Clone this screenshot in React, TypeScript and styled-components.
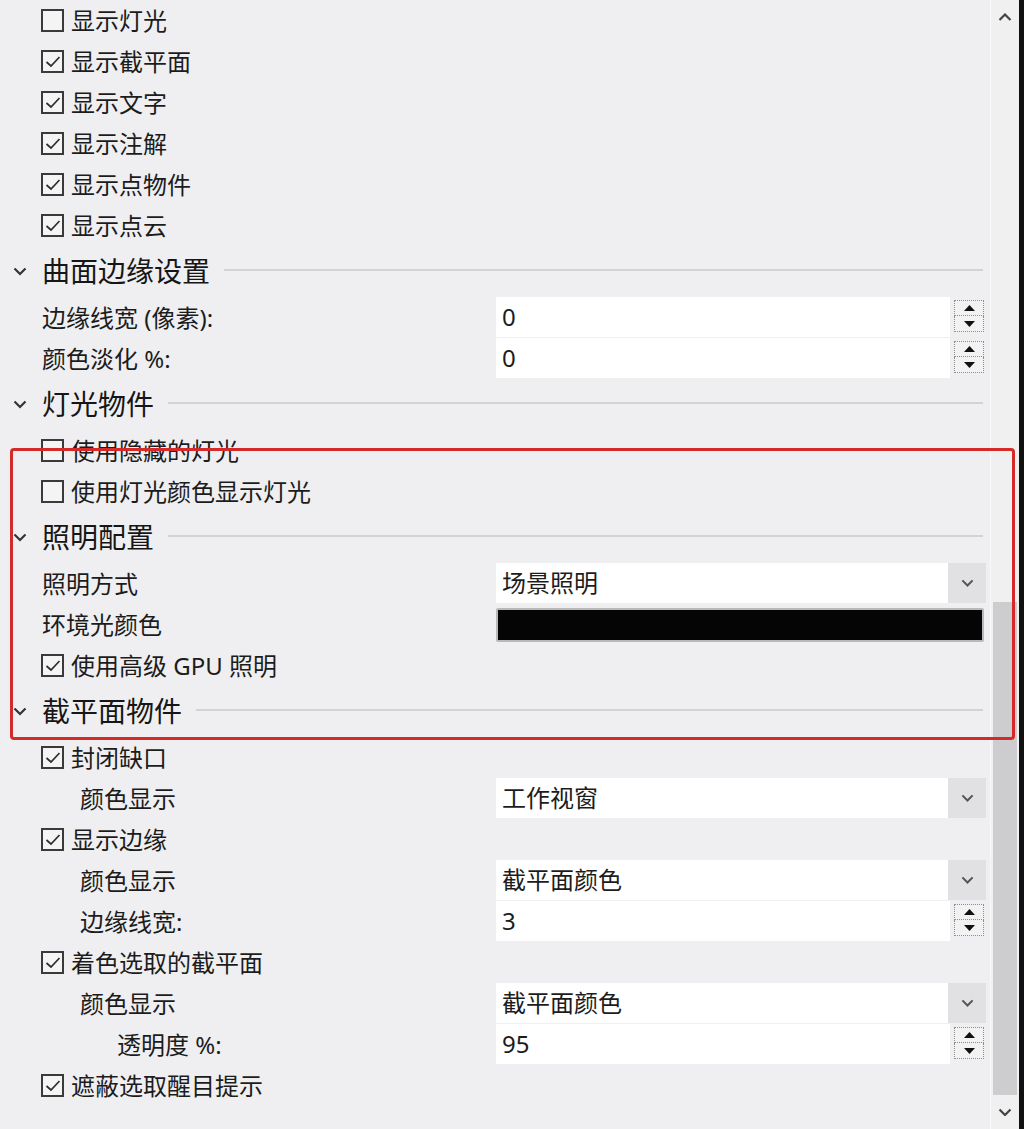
import React from 'react';
import styled, { createGlobalStyle } from 'styled-components';

const GlobalStyle = createGlobalStyle`
  html, body {
    margin: 0;
    padding: 0;
    background: #efeff1;
  }
  body {
    font-family: "Noto Sans", "Noto Sans CJK SC", sans-serif;
    color: #1c1c1c;
  }
`;

type Control =
  | { type: 'spin'; value: string }
  | { type: 'select'; value: string }
  | { type: 'color'; color: string };

type Item =
  | { kind: 'check'; label: string; checked: boolean }
  | { kind: 'header'; label: string }
  | { kind: 'field'; label: string; indent: number; control?: Control };

const items: Item[] = [
  { kind: 'check', label: '显示灯光', checked: false },
  { kind: 'check', label: '显示截平面', checked: true },
  { kind: 'check', label: '显示文字', checked: true },
  { kind: 'check', label: '显示注解', checked: true },
  { kind: 'check', label: '显示点物件', checked: true },
  { kind: 'check', label: '显示点云', checked: true },
  { kind: 'header', label: '曲面边缘设置' },
  { kind: 'field', label: '边缘线宽 (像素):', indent: 0, control: { type: 'spin', value: '0' } },
  { kind: 'field', label: '颜色淡化 %:', indent: 0, control: { type: 'spin', value: '0' } },
  { kind: 'header', label: '灯光物件' },
  { kind: 'check', label: '使用隐藏的灯光', checked: false },
  { kind: 'check', label: '使用灯光颜色显示灯光', checked: false },
  { kind: 'header', label: '照明配置' },
  { kind: 'field', label: '照明方式', indent: 0, control: { type: 'select', value: '场景照明' } },
  { kind: 'field', label: '环境光颜色', indent: 0, control: { type: 'color', color: '#050505' } },
  { kind: 'check', label: '使用高级 GPU 照明', checked: true },
  { kind: 'header', label: '截平面物件' },
  { kind: 'check', label: '封闭缺口', checked: true },
  { kind: 'field', label: '颜色显示', indent: 1, control: { type: 'select', value: '工作视窗' } },
  { kind: 'check', label: '显示边缘', checked: true },
  { kind: 'field', label: '颜色显示', indent: 1, control: { type: 'select', value: '截平面颜色' } },
  { kind: 'field', label: '边缘线宽:', indent: 1, control: { type: 'spin', value: '3' } },
  { kind: 'check', label: '着色选取的截平面', checked: true },
  { kind: 'field', label: '颜色显示', indent: 1, control: { type: 'select', value: '截平面颜色' } },
  { kind: 'field', label: '透明度 %:', indent: 2, control: { type: 'spin', value: '95' } },
  { kind: 'check', label: '遮蔽选取醒目提示', checked: true },
];

const indents = [42, 80, 117];

const Page = styled.div`
  position: relative;
  display: flex;
  height: 1129px;
  overflow: hidden;
  background: #efeff1;
`;

const Panel = styled.div`
  flex: 0 0 990px;
  display: flex;
  flex-direction: column;
`;

const Row = styled.div`
  display: grid;
  grid-template-columns: 496px 1fr;
  align-items: center;
  height: 41px;
  flex: 0 0 41px;
`;

const Label = styled.div<{ $indent: number }>`
  padding-left: ${p => p.$indent}px;
  font-size: 24px;
  line-height: 41px;
  white-space: nowrap;
  color: #1c1c1c;
`;

const CheckLabel = styled.label`
  display: flex;
  align-items: center;
  gap: 7px;
  padding-left: 41px;
  font-size: 24px;
  line-height: 41px;
  white-space: nowrap;
  color: #1c1c1c;
`;

const Box = styled.span`
  display: inline-flex;
  align-items: center;
  justify-content: center;
  width: 23px;
  height: 23px;
  box-sizing: border-box;
  border: 2px solid #3a3a3a;
  background: #f4f4f5;
  flex: 0 0 23px;
`;

const Header = styled.div`
  display: flex;
  align-items: center;
  height: 51px;
  flex: 0 0 51px;
  padding-right: 4px;
`;

const Chevron = styled.span`
  display: inline-flex;
  width: 28px;
  padding-left: 13px;
  box-sizing: content-box;
  margin-right: 1px;
`;

const HeaderText = styled.span`
  font-size: 28px;
  color: #161616;
  white-space: nowrap;
  line-height: 51px;
`;

const HeaderRule = styled.span`
  flex: 1;
  height: 2px;
  margin: 0 3px 0 14px;
  background: #d3d3d5;
  transform: translateY(-2px);
`;

const TextField = styled.div`
  display: flex;
  align-items: flex-start;
  height: 41px;
`;

const FieldValue = styled.div<{ $width: number }>`
  width: ${p => p.$width}px;
  height: 40px;
  box-sizing: border-box;
  padding-left: 6px;
  background: #ffffff;
  font-size: 24px;
  line-height: 40px;
  color: #1c1c1c;
  white-space: nowrap;
`;

const Spinner = styled.div`
  display: flex;
  flex-direction: column;
  margin: 3px 0 0 4px;
  width: 30px;
`;

const SpinHalf = styled.div`
  display: flex;
  align-items: center;
  justify-content: center;
  height: 16px;
  box-sizing: border-box;
  border: 1px dotted #8d8d8d;
  background: #f2f2f2;
  & + & {
    border-top: none;
  }
`;

const DropButton = styled.div`
  display: flex;
  align-items: center;
  justify-content: center;
  width: 38px;
  height: 40px;
  background: #e1e1e3;
`;

const Swatch = styled.div<{ $color: string }>`
  width: 488px;
  height: 34px;
  box-sizing: border-box;
  border: 2px solid #b9b9bb;
  border-radius: 2px;
  background: ${p => p.$color};
`;

const Scrollbar = styled.div`
  flex: 0 0 28px;
  display: flex;
  flex-direction: column;
  background: #f0f0f0;
  border-left: 1px solid #f8f8f8;
`;

const ScrollArrow = styled.div`
  display: flex;
  align-items: center;
  justify-content: center;
  height: 34px;
  flex: 0 0 34px;
`;

const ScrollThumb = styled.div`
  background: #cdcdcf;
  margin: 0 2px;
`;

const Spacer = styled.div`
  flex: 1;
`;

const Edge = styled.div`
  flex: 0 0 5px;
  background: #111;
`;

const Highlight = styled.div`
  position: absolute;
  left: 10px;
  top: 448px;
  width: 1005px;
  height: 292px;
  box-sizing: border-box;
  border: 3.5px solid #d42b2a;
  border-radius: 4px;
  pointer-events: none;
`;

const CheckMark = () => (
  <svg width="16" height="13" viewBox="0 0 16 13">
    <path d="M1.5 7 L6 11 L14.5 2" fill="none" stroke="#2e2e2e" strokeWidth="1.7" />
  </svg>
);

const Vee = ({ size = 14, color = '#333', up = false }: { size?: number; color?: string; up?: boolean }) => (
  <svg width={size} height={size * 0.6} viewBox="0 0 14 8.4">
    <path
      d={up ? 'M1.5 7 L7 1.5 L12.5 7' : 'M1.5 1.5 L7 7 L12.5 1.5'}
      fill="none"
      stroke={color}
      strokeWidth="2.2"
    />
  </svg>
);

const Triangle = ({ up }: { up: boolean }) => (
  <svg width="11" height="6" viewBox="0 0 11 6">
    <path d={up ? 'M0 6 L5.5 0 L11 6 Z' : 'M0 0 L5.5 6 L11 0 Z'} fill="#111" />
  </svg>
);

const renderControl = (c?: Control) => {
  if (!c) return <div />;
  if (c.type === 'spin') {
    return (
      <TextField>
        <FieldValue $width={454}>{c.value}</FieldValue>
        <Spinner>
          <SpinHalf><Triangle up /></SpinHalf>
          <SpinHalf><Triangle up={false} /></SpinHalf>
        </Spinner>
      </TextField>
    );
  }
  if (c.type === 'select') {
    return (
      <TextField>
        <FieldValue $width={452}>{c.value}</FieldValue>
        <DropButton><Vee size={13} color="#555" /></DropButton>
      </TextField>
    );
  }
  return <Swatch $color={c.color} />;
};

export default function App() {
  return (
    <>
      <GlobalStyle />
      <Page>
        <Panel>
          {items.map((item, i) => {
            if (item.kind === 'header') {
              return (
                <Header key={i}>
                  <Chevron><Vee size={14} color="#333" /></Chevron>
                  <HeaderText>{item.label}</HeaderText>
                  <HeaderRule />
                </Header>
              );
            }
            if (item.kind === 'check') {
              return (
                <Row key={i}>
                  <CheckLabel>
                    <Box>{item.checked && <CheckMark />}</Box>
                    {item.label}
                  </CheckLabel>
                  <div />
                </Row>
              );
            }
            return (
              <Row key={i}>
                <Label $indent={indents[item.indent]}>{item.label}</Label>
                {renderControl(item.control)}
              </Row>
            );
          })}
        </Panel>
        <Scrollbar>
          <ScrollArrow><Vee size={14} color="#444" up /></ScrollArrow>
          <ScrollThumb style={{ marginTop: 568, height: 493 }} />
          <Spacer />
          <ScrollArrow><Vee size={14} color="#444" /></ScrollArrow>
        </Scrollbar>
        <Edge />
        <Highlight />
      </Page>
    </>
  );
}
